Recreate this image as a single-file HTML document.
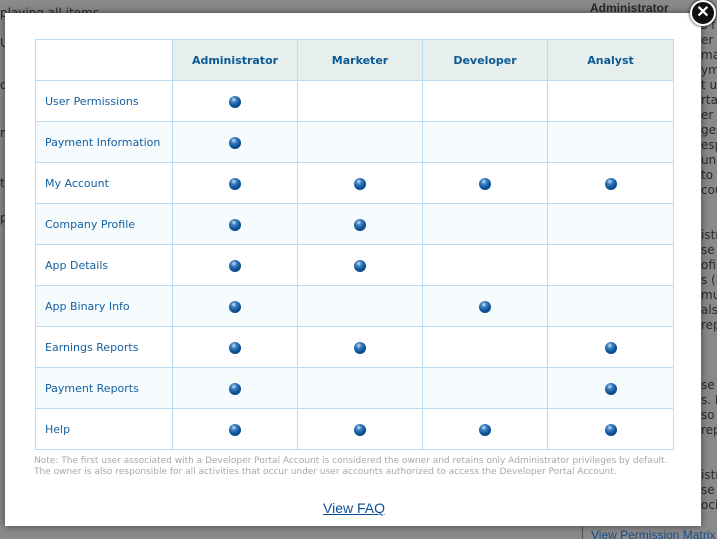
<!DOCTYPE html>
<html><head><style>
html,body{margin:0;padding:0;width:717px;height:539px;overflow:hidden;font-family:"DejaVu Sans","Liberation Sans",sans-serif;}
body{background:#8a8a8a;position:relative;}
.bgtxt{position:absolute;color:#2a2a2a;font-size:12px;line-height:15px;}
.modal{position:absolute;left:5px;top:13px;width:696px;height:513px;background:#fff;box-shadow:0 0 8px rgba(0,0,0,.5);}
table{position:absolute;left:30px;top:26px;border-collapse:collapse;font-size:11px;}
td,th{border:1px solid #bcdcef;padding:0;}
th{background:#e6eeee;color:#0b5a93;font-weight:bold;height:40px;font-size:11px;}
td{height:40px;}
td.l{color:#1560a0;padding-left:9px;text-align:left;}
tr.alt td{background:#f6fbfe;}
td.c{text-align:center;}
.d{display:inline-block;width:12px;height:12px;border-radius:50%;background:radial-gradient(circle at 40% 30%,#cfe3f5 0,#3a7fc0 25%,#0b4f94 60%,#063a70 100%);vertical-align:middle;}
.note{position:absolute;left:29px;top:443px;width:650px;font-size:9px;line-height:11px;color:#a8a8a8;}
.faq{position:absolute;left:318px;top:487px;font-family:"Liberation Sans",sans-serif;font-size:14px;color:#0b4f94;text-decoration:underline;}
.close{position:absolute;left:690px;top:0;width:22px;height:22px;border-radius:50%;background:#111;border:2px solid #fff;box-shadow:0 0 3px #000;color:#fff;font:bold 16px/22px "Liberation Sans",sans-serif;text-align:center;}
</style></head><body>
<div class="bgtxt" style="left:0;top:6px">playing all items</div>
<div class="bgtxt" style="left:0;top:36px">U</div>
<div class="bgtxt" style="left:0;top:78px">o</div>
<div class="bgtxt" style="left:0;top:126px">n</div>
<div class="bgtxt" style="left:0;top:176px">t</div>
<div class="bgtxt" style="left:0;top:211px">p</div>
<div class="bgtxt" style="left:590px;top:1px;font-weight:bold;font-family:'Liberation Sans',sans-serif">Administrator</div>
<div class="bgtxt" style="left:701px;top:18px;">s f<br>er<br>ma<br>ym<br>t us<br>rtal<br>er a<br>ges<br>esp<br>und<br>to<br>cou<br><br><br>istr<br>se<br>ofile<br>s (i<br>mu<br>als<br>rep<br><br><br><br>se<br>s. L<br>so<br>rep<br><br><br>istr<br>se<br>oci</div>
<div class="bgtxt" style="left:591px;top:528px;color:#1a4f8a;font-family:'Liberation Sans',sans-serif">View Permission Matrix</div>
<div style="position:absolute;left:582px;top:526px;width:1px;height:13px;background:#555"></div>
<div class="modal">
<table>
<tr><th style="width:136px;background:#fff"></th><th style="width:124px">Administrator</th><th style="width:124px">Marketer</th><th style="width:124px">Developer</th><th style="width:125px">Analyst</th></tr>
<tr><td class="l">User Permissions</td><td class="c"><span class="d"></span></td><td></td><td></td><td></td></tr>
<tr class="alt"><td class="l">Payment Information</td><td class="c"><span class="d"></span></td><td></td><td></td><td></td></tr>
<tr><td class="l">My Account</td><td class="c"><span class="d"></span></td><td class="c"><span class="d"></span></td><td class="c"><span class="d"></span></td><td class="c"><span class="d"></span></td></tr>
<tr class="alt"><td class="l">Company Profile</td><td class="c"><span class="d"></span></td><td class="c"><span class="d"></span></td><td></td><td></td></tr>
<tr><td class="l">App Details</td><td class="c"><span class="d"></span></td><td class="c"><span class="d"></span></td><td></td><td></td></tr>
<tr class="alt"><td class="l">App Binary Info</td><td class="c"><span class="d"></span></td><td></td><td class="c"><span class="d"></span></td><td></td></tr>
<tr><td class="l">Earnings Reports</td><td class="c"><span class="d"></span></td><td class="c"><span class="d"></span></td><td></td><td class="c"><span class="d"></span></td></tr>
<tr class="alt"><td class="l">Payment Reports</td><td class="c"><span class="d"></span></td><td></td><td></td><td class="c"><span class="d"></span></td></tr>
<tr><td class="l">Help</td><td class="c"><span class="d"></span></td><td class="c"><span class="d"></span></td><td class="c"><span class="d"></span></td><td class="c"><span class="d"></span></td></tr>
</table>
<div class="note">Note: The first user associated with a Developer Portal Account is considered the owner and retains only Administrator privileges by default. The owner is also responsible for all activities that occur under user accounts authorized to access the Developer Portal Account.</div>
<div class="faq">View FAQ</div>
</div>
<div class="close">✕</div>
</body></html>
